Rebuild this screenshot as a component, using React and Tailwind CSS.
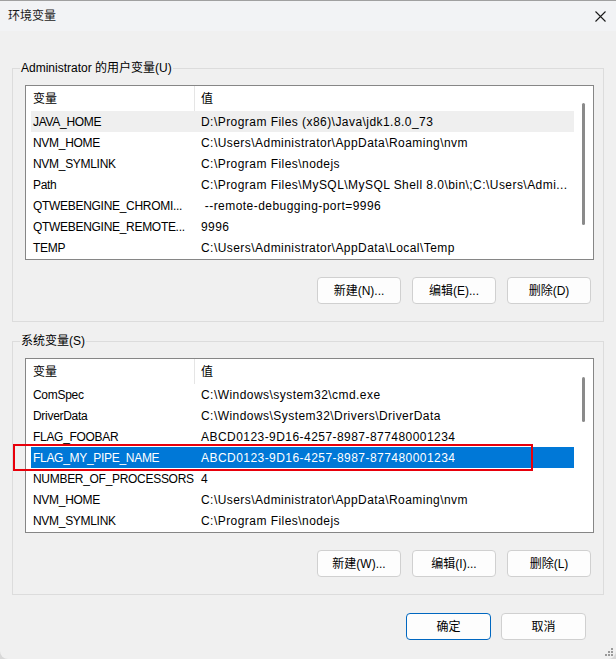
import React from 'react';

const FONT = { fontFamily: '"Liberation Sans", "Noto Sans CJK SC", sans-serif' };

const userVars = [
  ['JAVA_HOME', 'D:\\Program Files (x86)\\Java\\jdk1.8.0_73'],
  ['NVM_HOME', 'C:\\Users\\Administrator\\AppData\\Roaming\\nvm'],
  ['NVM_SYMLINK', 'C:\\Program Files\\nodejs'],
  ['Path', 'C:\\Program Files\\MySQL\\MySQL Shell 8.0\\bin\\;C:\\Users\\Admi...'],
  ['QTWEBENGINE_CHROMI...', ' --remote-debugging-port=9996'],
  ['QTWEBENGINE_REMOTE...', '9996'],
  ['TEMP', 'C:\\Users\\Administrator\\AppData\\Local\\Temp'],
];

const sysVars = [
  ['ComSpec', 'C:\\Windows\\system32\\cmd.exe'],
  ['DriverData', 'C:\\Windows\\System32\\Drivers\\DriverData'],
  ['FLAG_FOOBAR', 'ABCD0123-9D16-4257-8987-877480001234'],
  ['FLAG_MY_PIPE_NAME', 'ABCD0123-9D16-4257-8987-877480001234'],
  ['NUMBER_OF_PROCESSORS', '4'],
  ['NVM_HOME', 'C:\\Users\\Administrator\\AppData\\Roaming\\nvm'],
  ['NVM_SYMLINK', 'C:\\Program Files\\nodejs'],
];

function VarList({ rows, hover, selected, thumbTop, thumbHeight }) {
  return (
    <div className="h-[175px] border border-[#868686] bg-white flex overflow-hidden">
      <div className="flex-1 min-w-0 flex flex-col">
        {/* header */}
        <div className="h-[25px] shrink-0 flex items-center text-[12px] text-black">
          <div className="w-[168px] pl-[7px] shrink-0">变量</div>
          <div className="w-px h-full bg-[#e5e5e5]" />
          <div className="pl-[6px]">值</div>
        </div>
        <div className="pl-[5px] flex flex-col">
          {rows.map(([name, value], i) => {
            const isSel = i === selected;
            const isHover = i === hover;
            return (
              <div
                key={name + i}
                className={
                  'h-[21px] shrink-0 flex items-center text-[12px] whitespace-nowrap ' +
                  (isSel ? 'bg-[#0078d7] text-white' : isHover ? 'bg-[#efefef] text-black' : 'text-black')
                }
              >
                <div className="w-[163px] pl-[2px] shrink-0 overflow-hidden tracking-[-0.3px]">{name}</div>
                <div className="pl-[7px] overflow-hidden whitespace-pre tracking-[0.45px]">{value}</div>
              </div>
            );
          })}
        </div>
      </div>
      {/* scrollbar */}
      <div className="w-[19px] shrink-0 relative bg-white">
        <div
          className="absolute left-[8px] w-[3px] rounded-full bg-[#8a8a8a]"
          style={{ top: thumbTop, height: thumbHeight }}
        />
      </div>
    </div>
  );
}

function Btn({ children, primary, w = 'w-[84px]' }) {
  return (
    <button
      className={
        w +
        ' h-[27px] rounded-[4px] bg-[#fdfdfd] text-[12px] text-black flex items-center justify-center border ' +
        (primary ? 'border-[#0067c0]' : 'border-[#d0d0d0]')
      }
    >
      {children}
    </button>
  );
}

function Group({ title, children }) {
  return (
    <fieldset className="mx-[12px] border border-[#dcdcdc] p-0 min-w-0">
      <legend className="ml-[7px] px-[1px] text-[12px] leading-[16px] text-black">{title}</legend>
      <div className="pt-[9px] pl-[12px] pr-[9px] pb-[17px]">{children}</div>
    </fieldset>
  );
}

export default function App() {
  return (
    <div className="w-[616px] h-[659px] bg-[#d8d8d8]" style={FONT}>
      <div className="relative w-[616px] h-[659px] bg-[#f0f0f0] flex flex-col rounded-b-[8px] border-t border-[#a0a0a0] overflow-hidden">
        {/* title bar */}
        <div className="h-[30px] shrink-0 flex items-center justify-between pl-[8px] pr-[10px] bg-[#f2f3f5]">
          <span className="text-[12px] text-[#1a1a1a]">环境变量</span>
          <svg width="11" height="11" viewBox="0 0 11 11">
            <path d="M0.5 0.5 L10.5 10.5 M10.5 0.5 L0.5 10.5" stroke="#1a1a1a" strokeWidth="1.1" />
          </svg>
        </div>

        <div className="pt-[29px] flex flex-col">
          <Group title="Administrator 的用户变量(U)">
            <VarList rows={userVars} hover={0} selected={-1} thumbTop={17} thumbHeight={122} />
            <div className="mt-[17px] flex justify-end gap-[11px] pr-[3px]">
              <Btn>新建(N)...</Btn>
              <Btn>编辑(E)...</Btn>
              <Btn>删除(D)</Btn>
            </div>
          </Group>

          <div className="h-[11px]" />

          <Group title="系统变量(S)">
            <VarList rows={sysVars} hover={-1} selected={3} thumbTop={18} thumbHeight={45} />
            <div className="mt-[17px] flex justify-end gap-[11px] pr-[3px]">
              <Btn>新建(W)...</Btn>
              <Btn>编辑(I)...</Btn>
              <Btn>删除(L)</Btn>
            </div>
          </Group>

          <div className="mt-[18px] flex justify-end gap-[10px] pr-[30px]">
            <Btn primary w="w-[85px]">确定</Btn>
            <Btn w="w-[85px]">取消</Btn>
          </div>
        </div>

        {/* red highlight box */}
        <div className="absolute left-[13px] top-[443px] w-[520px] h-[27px] border-2 border-[#e8000b] pointer-events-none" />

        {/* resize grip */}
        <svg className="absolute right-[2px] bottom-[2px]" width="10" height="10" viewBox="0 0 10 10">
          <rect x="7" y="1" width="2" height="2" fill="#9a9a9a" />
          <rect x="4" y="4" width="2" height="2" fill="#9a9a9a" />
          <rect x="7" y="4" width="2" height="2" fill="#9a9a9a" />
          <rect x="1" y="7" width="2" height="2" fill="#9a9a9a" />
          <rect x="4" y="7" width="2" height="2" fill="#9a9a9a" />
          <rect x="7" y="7" width="2" height="2" fill="#9a9a9a" />
        </svg>
      </div>
    </div>
  );
}
